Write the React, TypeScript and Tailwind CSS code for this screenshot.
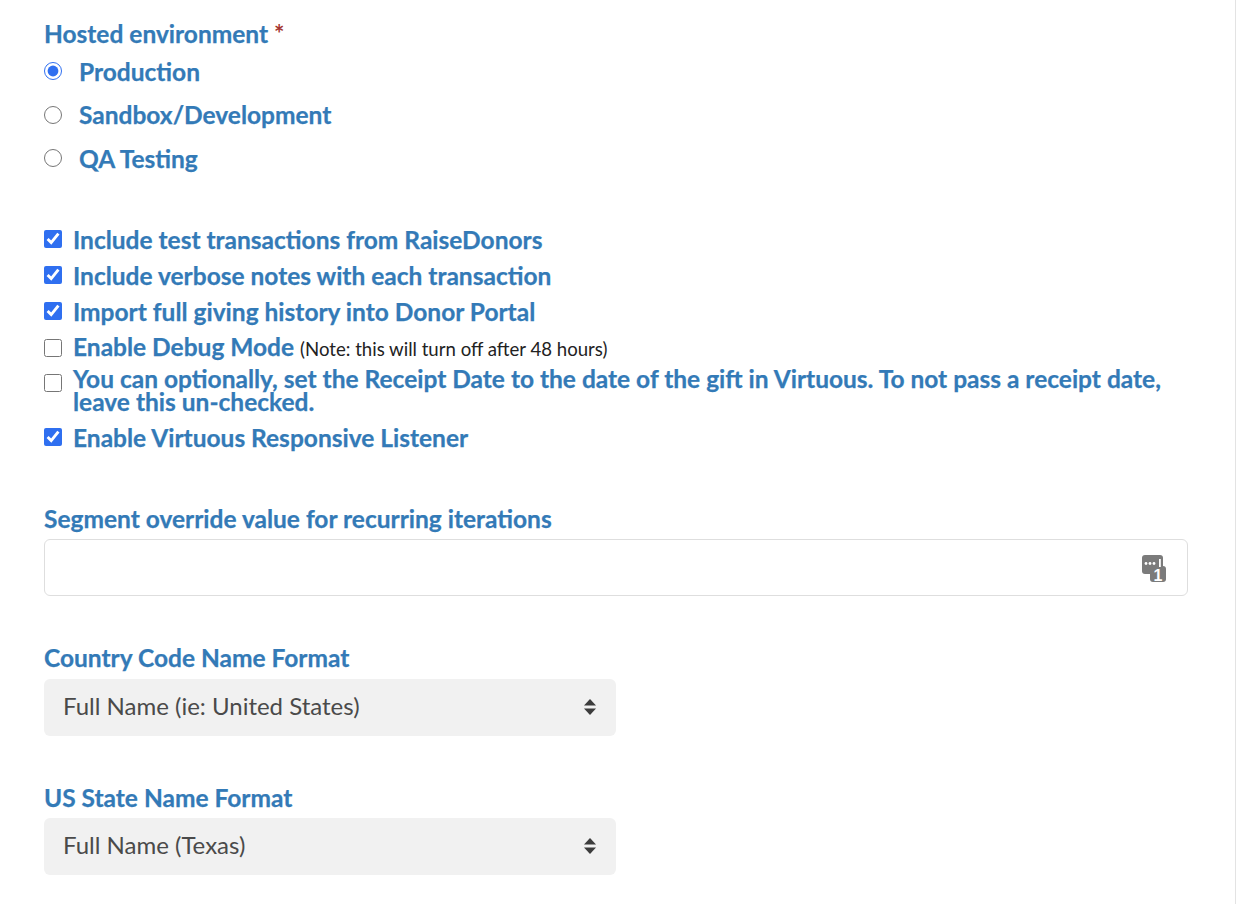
const font = { fontFamily: 'Lato, "Open Sans", sans-serif' };

const radios = [
  { label: 'Production', checked: true },
  { label: 'Sandbox/Development', checked: false },
  { label: 'QA Testing', checked: false },
];

const heading = 'text-[24.5px] leading-[28px] font-bold text-[#337ab7] [-webkit-text-stroke:0.25px_#337ab7]';

function Check({ on, children, className = '', boxClass = '' }: { on: boolean; children: React.ReactNode; className?: string; boxClass?: string }) {
  return (
    <label className={`flex items-center gap-[11px] text-[24.5px] leading-[23px] font-bold text-[#337ab7] [-webkit-text-stroke:0.25px_#337ab7] ${className}`}>
      <input type="checkbox" defaultChecked={on} className={`w-[18px] h-[18px] shrink-0 m-0 accent-[#2f6ff0] ${boxClass}`} />
      <span>{children}</span>
    </label>
  );
}

function PassIcon() {
  return (
    <svg width="26" height="30" viewBox="0 0 26 30" className="absolute right-[21px] top-[15px]">
      <rect x="1" y="1" width="21" height="19" rx="3" fill="#7b7b7b" />
      <rect x="9" y="12" width="16" height="16" rx="3" fill="#7b7b7b" />
      <circle cx="5" cy="9.5" r="1.4" fill="#fff" />
      <circle cx="9" cy="9.5" r="1.4" fill="#fff" />
      <circle cx="13" cy="9.5" r="1.4" fill="#fff" />
      <rect x="18" y="5" width="1.8" height="8" fill="#fff" />
      <text x="17" y="26.5" textAnchor="middle" fontSize="16" fontWeight="700" fill="#fff" fontFamily="Liberation Sans, sans-serif">1</text>
    </svg>
  );
}

function SelectBox({ value, className = 'mt-[7px]' }: { value: string; className?: string }) {
  return (
    <div className={`relative w-[572px] h-[57px] ${className}`}>
      <select
        defaultValue={value}
        className="w-full h-full appearance-none rounded-[6px] bg-[#f1f1f1] pl-[19px] pr-10 pb-[3px] text-[24px] text-[#4a4a4a] outline-none"
        style={font}
      >
        <option>{value}</option>
      </select>
      <svg width="12" height="16" viewBox="0 0 12 16" className="absolute right-[20px] top-[20px]">
        <path d="M6 0 L12 6.5 H0 Z" fill="#3c3c3c" />
        <path d="M6 16 L12 9.5 H0 Z" fill="#3c3c3c" />
      </svg>
    </div>
  );
}

export default function App() {
  return (
    <div className="w-[1236px] min-h-[904px] bg-white border-r border-[#e3e3e3] pl-[44px] pt-[20px] pb-[28px]" style={font}>
      <div className={heading}>
        Hosted environment <span className="text-[#a5352f] [-webkit-text-stroke:0px]">*</span>
      </div>

      <div className="mt-[10px] flex flex-col gap-[15.5px]">
        {radios.map((r) => (
          <label key={r.label} className="flex items-center gap-[17px] h-[28px] text-[24.5px] font-bold text-[#337ab7] [-webkit-text-stroke:0.25px_#337ab7]">
            <input type="radio" name="env" defaultChecked={r.checked} className="w-[18px] h-[18px] m-0 mb-[2px] accent-[#2f6ff0]" />
            <span>{r.label}</span>
          </label>
        ))}
      </div>

      <div className="mt-[48px] flex flex-col">
        <Check on className="h-[36px]">Include test transactions from RaiseDonors</Check>
        <Check on className="h-[36px]">Include verbose notes with each transaction</Check>
        <Check on className="h-[36px]">Import full giving history into Donor Portal</Check>
        <Check on={false} className="h-[38px]">
          Enable Debug Mode <span className="text-[18.6px] font-normal text-[#222] [-webkit-text-stroke:0px]">(Note: this will turn off after 48 hours)</span>
        </Check>
        <Check on={false} className="w-[1130px] mb-[6px]" boxClass="self-start mt-[7px]">
          You can optionally, set the Receipt Date to the date of the gift in Virtuous. To not pass a receipt date, leave this un-checked.
        </Check>
        <Check on className="h-[36px]">Enable Virtuous Responsive Listener</Check>
      </div>

      <div className={`mt-[50px] ${heading}`}>Segment override value for recurring iterations</div>
      <div className="relative w-[1144px] h-[57px] mt-[6px]">
        <input type="text" className="w-full h-full rounded-[6px] border border-[#dedede] bg-white outline-none" />
        <PassIcon />
      </div>

      <div className={`mt-[48px] ${heading}`}>Country Code Name Format</div>
      <SelectBox value="Full Name (ie: United States)" />

      <div className={`mt-[48px] ${heading}`}>US State Name Format</div>
      <SelectBox value="Full Name (Texas)" className="mt-[6px]" />
    </div>
  );
}
